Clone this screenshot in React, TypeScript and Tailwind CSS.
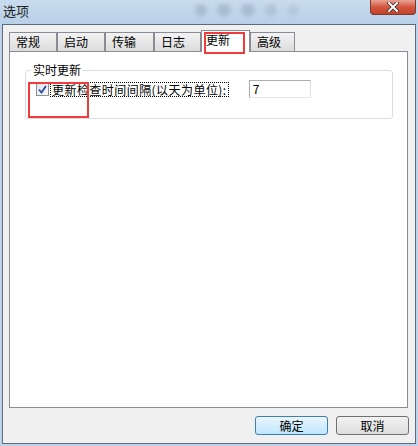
import React from "react";

const tabs = [
  { label: "常规", w: "w-[48px]" },
  { label: "启动", w: "w-[48px]" },
  { label: "传输", w: "w-[49px]" },
  { label: "日志", w: "w-[47px]" },
  { label: "更新", w: "w-[49px]", active: true },
  { label: "高级", w: "w-[45px]" },
];

export default function App() {
  return (
    <div
      className="relative w-[418px] h-[446px] overflow-hidden bg-[#bcd3ea] text-[12px] text-black"
      style={{ fontFamily: '"Noto Sans CJK SC", "Liberation Sans", sans-serif' }}
    >
      {/* title bar */}
      <div className="relative h-[24px] bg-gradient-to-b from-[#c9dcee] to-[#b8d0e9]">
        <span className="absolute left-[3px] top-[3px] leading-[16px] text-[13px] text-[#1e1e1e]">选项</span>
        <div className="absolute left-[195px] top-[4px] flex gap-[10px] opacity-30">
          <div className="w-[12px] h-[12px] rounded-full bg-[#6a7d90] blur-[2px]" />
          <div className="w-[14px] h-[12px] rounded-full bg-[#6a7d90] blur-[2px]" />
          <div className="w-[14px] h-[12px] rounded-full bg-[#6a7d90] blur-[2px]" />
          <div className="w-[12px] h-[12px] rounded-full bg-[#8394a6] blur-[2px]" />
          <div className="w-[12px] h-[12px] rounded-full bg-[#9aa9b8] blur-[2px]" />
        </div>
        <div className="absolute left-[370px] top-0 w-[46px] h-[15px] rounded-b-[4px] border border-t-0 border-[#7a3a30] bg-gradient-to-b from-[#e8a293] via-[#d2553d] to-[#c2442c] flex items-center justify-center">
          <svg width="12" height="10" viewBox="0 0 12 10">
            <path d="M2 1 L10 9 M10 1 L2 9" stroke="#3b2a28" strokeWidth="3.6" strokeLinecap="square" />
            <path d="M2 1 L10 9 M10 1 L2 9" stroke="#ffffff" strokeWidth="2" strokeLinecap="square" />
          </svg>
        </div>
      </div>

      {/* client area */}
      <div className="ml-[2px] w-[414px] h-[420px] border border-[#5e6b7c] bg-[#f0f0f0] flex flex-col">
        {/* tab strip */}
        <div className="flex items-end pl-[6px] pt-[5px] h-[26px]">
          {tabs.map((t) =>
            t.active ? (
              <div
                key={t.label}
                className={`${t.w} h-[22px] -mb-px z-10 bg-white border border-b-0 border-[#898c95] pl-[4px] pt-[1px] leading-[16px]`}
              >
                {t.label}
              </div>
            ) : (
              <div
                key={t.label}
                className={`${t.w} h-[19px] border border-b-0 border-[#898c95] bg-gradient-to-b from-[#f3f3f3] to-[#dcdcdc] pl-[6px] leading-[17px]`}
              >
                {t.label}
              </div>
            )
          )}
        </div>

        {/* panel */}
        <div className="ml-[6px] w-[399px] h-[357px] bg-white border border-[#898c95] pt-[18px] pl-[15px]">
          <div className="relative w-[368px] h-[49px] rounded-[3px] border border-[#d5dfe5]">
            <span className="absolute left-[5px] -top-[8px] bg-white px-[2px] leading-[14px]">实时更新</span>
            <div className="flex items-center pt-[10px] pl-[10px]">
              <div className="w-[13px] h-[13px] border border-[#8f8f8f] bg-gradient-to-br from-[#dfe6ee] to-[#f8f8f8] flex items-center justify-center">
                <svg width="9" height="9" viewBox="0 0 9 9">
                  <path d="M1 4.5 L3.5 7.5 L8 1" fill="none" stroke="#2a4a9e" strokeWidth="1.8" />
                </svg>
              </div>
              <span className="ml-[1px] px-[1px] h-[15px] leading-[13px] tracking-[0.45px] border border-dotted border-black">
                更新检查时间间隔(以天为单位):
              </span>
              <div className="ml-[20px] -mt-[1px] w-[62px] h-[18px] border border-[#abadb3] border-b-[#e3e9ef] border-r-[#dbdfe6] pl-[3px] leading-[16px]">
                7
              </div>
            </div>
          </div>
        </div>

        {/* buttons */}
        <div className="flex justify-end gap-[8px] pr-[6px] mt-[8px]">
          <button className="w-[73px] h-[19px] rounded-[3px] border border-[#3c7fb1] bg-gradient-to-b from-[#eaf6fd] to-[#bee6fd] leading-[16px]">
            确定
          </button>
          <button className="w-[73px] h-[19px] rounded-[3px] border border-[#707070] bg-gradient-to-b from-[#f2f2f2] to-[#dddddd] leading-[16px]">
            取消
          </button>
        </div>
      </div>

      {/* annotation rectangles */}
      <div className="absolute left-[204px] top-[32px] w-[41px] h-[22px] border-2 border-[#f23c3c] z-20" />
      <div className="absolute left-[28px] top-[82px] w-[61px] h-[36px] border-2 border-[#f23c3c] z-20" />
    </div>
  );
}
